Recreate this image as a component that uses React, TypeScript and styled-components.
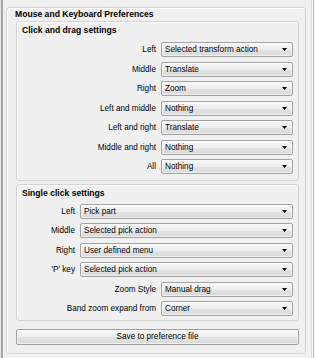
import React from "react";
import styled, { createGlobalStyle } from "styled-components";

const Global = createGlobalStyle`
  html, body { margin: 0; padding: 0; background: #f0f0f0; }
  body { font-family: "Liberation Sans", Arial, sans-serif; color: #000; }
`;

const Window = styled.div`
  box-sizing: border-box;
  width: 315px;
  height: 358px;
  padding-top: 7px;
  padding-left: 6px;
  background: linear-gradient(to right, #e4e4e4 0 1px, #a6a6a6 1px 3px, #f0f0f0 3px 311px, #dcdcdc 311px 312px, #f4f4f4 312px 313px, #c2c2c2 313px 314px, #f0f0f0 314px);
`;

const OuterBox = styled.div`
  box-sizing: border-box;
  width: 300px;
  height: 347px;
  border: 1px solid #d3d3d3;
  border-radius: 3px;
  box-shadow: inset 1px 1px 0 #ffffff;
  padding-left: 9px;
  display: flex;
  flex-direction: column;
`;

const OuterTitle = styled.div`
  margin-left: -1px;
  height: 12px;
  line-height: 12px;
  font-size: 8.6px;
  font-weight: bold;
`;

const GroupBox = styled.div<{ $top: number; $titleGap: number; $bottom: number }>`
  box-sizing: border-box;
  width: 283px;
  margin-top: ${(p) => p.$top}px;
  border: 1px solid #d3d3d3;
  border-radius: 3px;
  box-shadow: inset 1px 1px 0 #ffffff;
  padding: 2px 5px ${(p) => p.$bottom}px 0;
  display: flex;
  flex-direction: column;
  gap: ${(p) => p.$titleGap}px;
`;

const GroupTitle = styled.div`
  padding-left: 5px;
  height: 12px;
  line-height: 12px;
  font-size: 8.6px;
  font-weight: bold;
`;

const Rows = styled.div`
  display: flex;
  flex-direction: column;
  gap: 4.5px;
`;

const Row = styled.div`
  display: flex;
  align-items: center;
  gap: 5px;
  height: 15px;
`;

const Label = styled.div<{ $w: number }>`
  width: ${(p) => p.$w}px;
  flex: none;
  text-align: right;
  font-size: 8.2px;
  white-space: nowrap;
`;

const Combo = styled.div`
  box-sizing: border-box;
  flex: 1;
  height: 15px;
  border: 1px solid #a2a2a2;
  border-radius: 2px;
  background: linear-gradient(#f7f7f7, #eeeeee 50%, #e3e3e3 51%, #dadada);
  box-shadow: inset 0 0 0 1px rgba(255, 255, 255, 0.55);
  display: flex;
  align-items: center;
  padding: 0 5px 0 3px;
  font-size: 8.2px;
`;

const ComboText = styled.span`
  flex: 1;
  white-space: nowrap;
`;

const Arrow = () => (
  <svg width="5" height="3" viewBox="0 0 5 3">
    <path d="M0 0h5L2.5 3z" fill="#000" />
  </svg>
);

const SaveButton = styled.div`
  box-sizing: border-box;
  width: 283px;
  height: 16px;
  margin-top: 7.5px;
  border: 1px solid #a2a2a2;
  border-radius: 2px;
  background: linear-gradient(#f7f7f7, #eeeeee 50%, #e3e3e3 51%, #dadada);
  box-shadow: inset 0 0 0 1px rgba(255, 255, 255, 0.55);
  display: flex;
  align-items: center;
  justify-content: center;
  font-size: 8.2px;
`;

type Item = { label: string; value: string; w: number };

const drag: Item[] = [
  { label: "Left", value: "Selected transform action", w: 139 },
  { label: "Middle", value: "Translate", w: 139 },
  { label: "Right", value: "Zoom", w: 139 },
  { label: "Left and middle", value: "Nothing", w: 139 },
  { label: "Left and right", value: "Translate", w: 139 },
  { label: "Middle and right", value: "Nothing", w: 139 },
  { label: "All", value: "Nothing", w: 139 },
];

const single: Item[] = [
  { label: "Left", value: "Pick part", w: 58 },
  { label: "Middle", value: "Selected pick action", w: 58 },
  { label: "Right", value: "User defined menu", w: 58 },
  { label: "'P' key", value: "Selected pick action", w: 58 },
  { label: "Zoom Style", value: "Manual drag", w: 139 },
  { label: "Band zoom expand from", value: "Corner", w: 139 },
];

const renderRows = (items: Item[]) => (
  <Rows>
    {items.map((it, i) => (
      <Row key={i}>
        <Label $w={it.w}>{it.label}</Label>
        <Combo>
          <ComboText>{it.value}</ComboText>
          <Arrow />
        </Combo>
      </Row>
    ))}
  </Rows>
);

export default function App() {
  return (
    <>
      <Global />
      <Window>
        <OuterBox>
          <OuterTitle>Mouse and Keyboard Preferences</OuterTitle>
          <GroupBox $top={1} $titleGap={6} $bottom={6}>
            <GroupTitle>Click and drag settings</GroupTitle>
            {renderRows(drag)}
          </GroupBox>
          <GroupBox $top={2.5} $titleGap={5} $bottom={4}>
            <GroupTitle>Single click settings</GroupTitle>
            {renderRows(single)}
          </GroupBox>
          <SaveButton>Save to preference file</SaveButton>
        </OuterBox>
      </Window>
    </>
  );
}
